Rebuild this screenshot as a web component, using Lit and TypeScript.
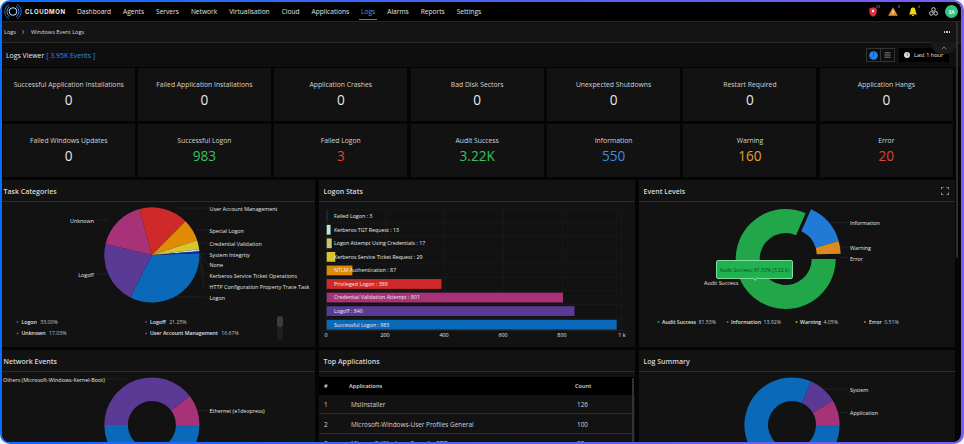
import { LitElement, html, css, svg } from "lit";
import { customElement } from "lit/decorators.js";

const C = { blue: "#0a69b8", purple: "#5b3a96", mag: "#a83277", red: "#cf2a2a", orange: "#e08a05", yellow: "#d8c52c", pale: "#bfe3da", navy: "#1a2a9c", olive: "#c6c86a", green: "#22a64a", info: "#1f7bd6", warn: "#db8a1e" };

function pt(cx: number, cy: number, r: number, a: number) {
  const t = (a * Math.PI) / 180;
  return `${(cx + r * Math.cos(t)).toFixed(2)} ${(cy + r * Math.sin(t)).toFixed(2)}`;
}
function arc(cx: number, cy: number, r0: number, r1: number, a: number, b: number) {
  const large = b - a > 180 ? 1 : 0;
  if (r0 === 0) return `M${cx} ${cy}L${pt(cx, cy, r1, a)}A${r1} ${r1} 0 ${large} 1 ${pt(cx, cy, r1, b)}Z`;
  return `M${pt(cx, cy, r1, a)}A${r1} ${r1} 0 ${large} 1 ${pt(cx, cy, r1, b)}L${pt(cx, cy, r0, b)}A${r0} ${r0} 0 ${large} 0 ${pt(cx, cy, r0, a)}Z`;
}
type Slice = [number, number, string];
const slices = (cx: number, cy: number, r0: number, r1: number, list: Slice[]) =>
  list.map(([a, b, c]) => svg`<path d=${arc(cx, cy, r0, r1, a, b)} fill=${c}></path>`);
type Label = [string, number, number, string, number, number, number, number];
const labels = (list: Label[]) =>
  list.map(([t, x, y, anchor, x1, y1, x2, y2]) => svg`
    <path class="lead" d="M${x1} ${y1}L${x2} ${y2}"></path>
    <text class="lbl" x=${x} y=${y + 0.7} text-anchor=${anchor}>${t}</text>`);

const NAV = ["Dashboard", "Agents", "Servers", "Network", "Virtualisation", "Cloud", "Applications", "Logs", "Alarms", "Reports", "Settings"];
const KPI: [string, string, string?][] = [
  ["Successful Application Installations", "0"],
  ["Failed Application Installations", "0"],
  ["Application Crashes", "0"],
  ["Bad Disk Sectors", "0"],
  ["Unexpected Shutdowns", "0"],
  ["Restart Required", "0"],
  ["Application Hangs", "0"],
  ["Failed Windows Updates", "0"],
  ["Successful Logon", "983", "g"],
  ["Failed Logon", "3", "r"],
  ["Audit Success", "3.22K", "g"],
  ["Information", "550", "b"],
  ["Warning", "160", "o"],
  ["Error", "20", "r"],
];
const BARS: [string, number, string][] = [
  ["Failed Logon : 3", 3, C.navy],
  ["Kerberos TGT Request : 13", 13, C.pale],
  ["Logon Attempt Using Credentials : 17", 17, C.olive],
  ["Kerberos Service Ticket Request : 29", 29, C.yellow],
  ["NTLM Authentication : 87", 87, C.orange],
  ["Privileged Logon : 389", 389, C.red],
  ["Credential Validation Attempt : 801", 801, C.mag],
  ["Logoff : 840", 840, C.purple],
  ["Successful Logon : 983", 983, C.blue],
];

@customElement("app-root")
export class AppRoot extends LitElement {
  static styles = css`
    :host { display: block; width: 964px; height: 444px; background: #f4f4f6; font-family: "Open Sans", "Noto Sans", sans-serif; color: #e4e4e4; }
    .frame { width: 964px; height: 444px; box-sizing: border-box; padding: 2px 3px 2px 2px; border-radius: 10px; background: linear-gradient(90deg, #0a6eff 0%, #4f63ee 55%, #7a5cf6 100%); }
    .inner { position: relative; height: 440px; border-radius: 8px; background: #050505; overflow: hidden; }
    .nav { height: 19px; background: #000; border-bottom: 1px solid #262626; display: flex; align-items: center; box-sizing: content-box; }
    .brand { display: flex; align-items: center; gap: 3px; width: 73px; margin-left: 2px; flex: none; }
    .brand span { font: 700 6px Inter, sans-serif; letter-spacing: 0.62px; color: #eee; }
    .menu { display: flex; gap: 12px; font-size: 6.6px; color: #e2e2e2; height: 100%; align-items: center; }
    .menu span { position: relative; line-height: 19px; }
    .menu .on { color: #4a9bf0; }
    .menu .on::after { content: ""; position: absolute; left: -2px; right: -2px; bottom: 1.5px; height: 1px; background: #3d8de8; }
    .tools { margin-left: auto; display: flex; align-items: center; margin-right: 3px; }
    .tool { position: relative; width: 20px; height: 14px; display: flex; align-items: center; justify-content: center; }
    .tool i { position: absolute; right: 3px; top: -1px; font: normal 3.6px "Open Sans", sans-serif; color: #aaa; }
    .avatar { width: 13px; height: 13px; border-radius: 50%; background: #35c486; color: #eafff4; font: 700 4.6px "Open Sans", sans-serif; display: flex; align-items: center; justify-content: center; margin-left: 2px; }
    .crumb { height: 20px; background: #141414; border-bottom: 1px solid #2a2a2a; display: flex; align-items: center; padding: 0 11px 0 2px; font-size: 5.6px; color: #ddd; gap: 4.5px; }
    .crumb .gap { margin-left: 2px; }
    .crumb .dots { margin-left: auto; display: flex; gap: 1px; }
    .crumb .dots b { width: 1.4px; height: 1.4px; border-radius: 50%; background: #eee; }
    .bump { position: absolute; right: 4px; top: 40px; width: 26px; height: 12px; border-radius: 0 0 11px 11px; background: #191919; display: flex; align-items: center; justify-content: center; }
    .viewer { height: 24px; background: #0e0e0e; display: flex; align-items: center; padding: 0 12px 0 4px; font-size: 6.9px; font-weight: 500; color: #e8e8e8; gap: 2px; }
    .viewer > span, .viewer em { padding-top: 1px; }
    .viewer em { font-style: normal; color: #2f8cf0; }
    .viewer .right { margin-left: auto; display: flex; align-items: center; gap: 4px; }
    .toggle { display: flex; height: 14px; border: 1px solid #333; box-sizing: border-box; }
    .toggle span { width: 13px; display: flex; align-items: center; justify-content: center; }
    .toggle span + span { border-left: 1px solid #333; }
    .time { height: 14px; width: 50px; background: #000; display: flex; align-items: center; gap: 4px; padding-left: 5px; box-sizing: border-box; font-size: 5.6px; color: #e6e6e6; }
    .kpis { display: grid; grid-template-columns: 131.5px repeat(6, 133px); grid-auto-rows: 53px; gap: 3px 3.4px; margin: 1px 0 0 1px; }
    .kpi { background: #121212; text-align: center; padding-top: 12px; box-sizing: border-box; }
    .kpi p { margin: 0; font-size: 6.8px; line-height: 10px; color: #d2d2d2; }
    .kpi b { display: block; font-weight: 400; font-size: 13.6px; line-height: 18px; margin-top: 1px; color: #e8e8e8; }
    .kpi b.g { color: #35c45a; } .kpi b.r { color: #e0403a; } .kpi b.b { color: #3b8ce8; } .kpi b.o { color: #e8a02e; }
    .panels { display: grid; grid-template-columns: repeat(3, 316px); grid-template-rows: 166.6px 100px; gap: 3.4px 4px; margin: 3px 0 0 -3px; }
    .panel { background: #121212; overflow: hidden; position: relative; }
    .head { height: 22px; border-bottom: 1px solid #2b2b2b; box-sizing: border-box; display: flex; align-items: center; justify-content: space-between; padding: 1.5px 6px 0 4.5px; font-size: 7px; font-weight: 600; color: #d8d8d8; }
    .panel svg.chart { display: block; }
    .lbl { font-size: 5.4px; fill: #e6e6e6; }
    .lead { stroke: #2e2e2e; stroke-width: 0.6; fill: none; }
    .leg { font-size: 5.2px; fill: #e0e0e0; font-weight: 600; }
    .legv { font-size: 5.2px; fill: #c4c4c4; font-weight: 400; }
    .grid { stroke: #1f1f1f; stroke-width: 0.6; }
    .barl { font-size: 5.3px; fill: #eee; }
    .tip { position: absolute; left: 77px; top: 80px; width: 77px; height: 19px; box-sizing: border-box; border: 0.7px solid #7fdc9c; border-radius: 2px; background: #20b24f; color: #0d4a22; font-size: 5px; display: flex; align-items: center; justify-content: center; white-space: nowrap; }
    .tip::after { content: ""; position: absolute; left: 36px; bottom: -2.4px; width: 3.4px; height: 3.4px; background: #20b24f; border-right: 0.7px solid #7fdc9c; border-bottom: 0.7px solid #7fdc9c; transform: rotate(45deg); }
    .thead, .row { display: grid; grid-template-columns: 25px 226px 60px; padding-left: 5px; align-items: center; }
    .thead { height: 18px; margin-top: 5px; padding-top: 1px; box-sizing: border-box; background: #000; font-size: 5.6px; font-weight: 600; color: #ddd; }
    .row { height: 19.5px; padding-top: 1px; border-bottom: 1px solid #2a2a2a; box-sizing: border-box; font-size: 6.4px; color: #d4d4d4; }
    .row span:nth-child(2), .row span:nth-child(3) { padding-left: 2px; }
    .tbar { position: absolute; right: 1px; top: 28px; bottom: 0; width: 2px; background: #333; }
    .scroll { position: absolute; right: 3px; top: 20px; width: 2.4px; height: 236px; background: #2e2e2e; border-radius: 2px; }
  `;

  private taskChart() {
    const cx = 151.9, cy = 256;
    return svg`<svg class="chart" width="316" height="143.6" viewBox="-1 203 316 143.6">
      ${slices(cx, cy, 0, 47.6, [
        [-2, 117, C.blue], [117, 193.5, C.purple], [193.5, 254.8, C.mag], [254.8, 314.8, C.red],
        [314.8, 342, C.orange], [342, 353, C.yellow], [353, 355.5, C.pale], [355.5, 358, C.navy],
      ])}
      ${labels([
        ["User Account Management", 209.5, 211, "start", 177, 209, 207, 209],
        ["Special Logon", 209.5, 233, "start", 196, 231, 207, 231],
        ["Credential Validation", 209.5, 246, "start", 199, 244, 207, 244],
        ["System Integrity", 209.5, 257, "start", 199, 254, 207, 255],
        ["None", 209.5, 267.5, "start", 200, 255, 207, 265],
        ["Kerberos Service Ticket Operations", 209.5, 278, "start", 200, 256, 204, 276],
        ["HTTP Configuration Property Trace Task", 209.5, 289, "start", 199, 258, 204, 287],
        ["Logon", 209.5, 300, "start", 176, 298, 207, 298],
        ["Unknown", 94, 223, "end", 108, 221, 97, 221],
        ["Logoff", 94, 277, "end", 106, 275, 97, 275],
      ])}
      <circle cx="17.5" cy="323" r="1" fill=${C.blue}></circle>
      <text x="21.5" y="325" class="leg">Logon <tspan class="legv" dx="2">33.00%</tspan></text>
      <circle cx="146" cy="323" r="1" fill=${C.purple}></circle>
      <text x="150" y="325" class="leg">Logoff <tspan class="legv" dx="2">21.25%</tspan></text>
      <circle cx="17.5" cy="334.5" r="1" fill=${C.mag}></circle>
      <text x="21.5" y="336.5" class="leg">Unknown <tspan class="legv" dx="2">17.03%</tspan></text>
      <circle cx="146" cy="334.5" r="1" fill=${C.mag}></circle>
      <text x="150" y="336.5" class="leg">User Account Management <tspan class="legv" dx="2">16.67%</tspan></text>
      <rect x="277" y="317" width="6" height="25" rx="3" fill="#1e1e1e"></rect>
      <rect x="277" y="317" width="6" height="11" rx="3" fill="#3c3c3c"></rect>
    </svg>`;
  }

  private logonChart() {
    const x0 = 326.7, k = 0.295;
    const top = 210.5, pitch = 13.56;
    return svg`<svg class="chart" width="316" height="143.6" viewBox="319 203 316 143.6">
      ${[1, 2, 3, 4, 5].map((i) => svg`<path class="grid" d="M${x0 + i * 59} 210V331"></path>`)}
      ${BARS.map((_, i) => svg`<path class="grid" d="M${x0} ${top + i * pitch}H622"></path>`)}
      <path d="M${x0} 210V331.5H622" stroke="#2b2b2b" stroke-width="0.6" fill="none"></path>
      ${BARS.map(([t, v, c], i) => svg`
        <rect x=${x0} y=${top + i * pitch + 1.8} width=${Math.max(v * k, 0.9)} height="9.8" fill=${c}></rect>
        <text class="barl" x="334" y=${top + i * pitch + 8.6}>${t}</text>`)}
      ${[["0", 326], ["200", 385], ["400", 444], ["600", 503], ["800", 562], ["1 k", 622]].map(
        ([t, x]) => svg`<text class="lbl" x=${x} y="338.5" text-anchor="middle">${t}</text>`
      )}
    </svg>`;
  }

  private levelChart() {
    const cx = 785.7, cy = 260;
    return svg`<svg class="chart" width="316" height="143.6" viewBox="639 203 316 143.6">
      ${slices(cx, cy, 26, 50, [[0, 293.5, C.green]])}
      ${slices(cx + 5, cy - 4, 26, 50, [[294, 343.6, C.info], [343.6, 358.6, C.warn]])}
      ${labels([
        ["Information", 850, 225.5, "start", 829, 223.5, 848, 223.5],
        ["Warning", 850, 250.2, "start", 840, 248, 848, 248],
        ["Error", 850, 261.3, "start", 840, 258, 848, 259],
        ["Audit Success", 704, 285.3, "start", 735, 283, 737, 283],
      ])}
      <circle cx="658.5" cy="323" r="1" fill=${C.green}></circle>
      <text x="662" y="325" class="leg">Audit Success <tspan class="legv" dx="1">81.53%</tspan></text>
      <circle cx="727.5" cy="323" r="1" fill=${C.info}></circle>
      <text x="731" y="325" class="leg">Information <tspan class="legv" dx="1">13.92%</tspan></text>
      <circle cx="796.5" cy="323" r="1" fill=${C.warn}></circle>
      <text x="800" y="325" class="leg">Warning <tspan class="legv" dx="1">4.05%</tspan></text>
      <circle cx="865" cy="323" r="1" fill="#c85a8a"></circle>
      <text x="869" y="325" class="leg">Error <tspan class="legv" dx="1">0.51%</tspan></text>
    </svg>`;
  }

  private netChart() {
    const cx = 151.9, cy = 426;
    return svg`<svg class="chart" width="316" height="77" viewBox="-1 373 316 77">
      ${slices(cx, cy, 24, 47.6, [[0, 180, C.blue], [180, 323, C.purple], [323, 360, C.mag]])}
      ${labels([
        ["Others (Microsoft-Windows-Kernel-Boot)", 3, 382, "start", 96, 380, 126, 380],
        ["Ethernet (e1dexpress)", 209.5, 413.5, "start", 198, 411.5, 207, 411.5],
      ])}
    </svg>`;
  }

  private sumChart() {
    const cx = 792, cy = 426;
    return svg`<svg class="chart" width="316" height="77" viewBox="639 373 316 77">
      ${slices(cx, cy, 24, 47.6, [[0, 294, C.blue], [294, 329.5, C.purple], [329.5, 360, C.mag]])}
      ${labels([
        ["System", 850, 392, "start", 822, 390, 848, 390],
        ["Application", 850, 415.5, "start", 838, 413.5, 848, 413.5],
      ])}
    </svg>`;
  }

  render() {
    return html`<div class="frame"><div class="inner">
      <div class="nav">
        <div class="brand">
          <svg width="18" height="17" viewBox="0 0 18 17" fill="none">
            <path d="M5 1.5A8 8 0 0 0 5 15.5M13 1.5A8 8 0 0 1 13 15.5" stroke="#1e6fe0" stroke-width="1"></path>
            <path d="M6 3.3A6 6 0 0 0 6 13.7M12 3.3A6 6 0 0 1 12 13.7" stroke="#3f8df0" stroke-width="1"></path>
            <circle cx="9" cy="8.5" r="3.8" stroke="#cfe2ff" stroke-width="1"></circle>
          </svg>
          <span>CLOUDMON</span>
        </div>
        <div class="menu">${NAV.map((n) => html`<span class=${n === "Logs" ? "on" : ""}>${n}</span>`)}</div>
        <div class="tools">
          <div class="tool"><svg width="8" height="10" viewBox="0 0 8 10"><path d="M4 0.3L7.7 1.6V5C7.7 7.4 5.8 9 4 9.8 2.2 9 .3 7.4 .3 5V1.6Z" fill="#e0303c"></path><circle cx="4" cy="4" r="1.2" fill="#fff"></circle></svg><i>23</i></div>
          <div class="tool"><svg width="10" height="9" viewBox="0 0 10 9"><path d="M5 0.2L9.8 8.8H.2Z" fill="#e8912a"></path><path d="M5 3V6M5 6.8V7.6" stroke="#fff" stroke-width="0.8"></path></svg><i>8</i></div>
          <div class="tool"><svg width="8" height="10" viewBox="0 0 8 10"><path d="M4 0.4C5.9 0.4 6.5 2 6.5 3.6 6.5 5.6 7.8 6.6 7.8 7.4H.2C.2 6.6 1.5 5.6 1.5 3.6 1.5 2 2.1 0.4 4 0.4Z" fill="#f4d80e"></path><path d="M2.9 8.1H5.1A1.1 1.1 0 0 1 2.9 8.1Z" fill="#f4d80e"></path></svg><i>4</i></div>
          <div class="tool"><svg width="9" height="9" viewBox="0 0 9 9" fill="none" stroke="#e6e6e6" stroke-width="0.9"><circle cx="4.5" cy="2.4" r="1.8"></circle><circle cx="2.3" cy="6.4" r="1.8"></circle><circle cx="6.7" cy="6.4" r="1.8"></circle></svg></div>
          <div class="avatar">SA</div>
        </div>
      </div>
      <div class="crumb">
        <span>Logs</span>
        <svg width="4" height="6" viewBox="0 0 4 6" fill="none" stroke="#bbb" stroke-width="0.6"><path d="M1 .8L3 3 1 5.2"></path></svg>
        <span class="gap">Windows Event Logs</span>
        <span class="dots"><b></b><b></b><b></b></span>
      </div>
      <div class="bump"><svg width="6" height="4" viewBox="0 0 6 4" fill="none" stroke="#bbb" stroke-width="0.6"><path d="M.8 3.2L3 1 5.2 3.2"></path></svg></div>
      <div class="viewer">
        <span>Logs Viewer</span><em>[ 3.95K Events ]</em>
        <div class="right">
          <div class="toggle">
            <span><svg width="9" height="9" viewBox="0 0 9 9"><circle cx="4.5" cy="4.5" r="4.3" fill="#2287ee"></circle><path d="M4.5 4.5V.6M4.5 4.5L1.5 7" stroke="#0b1a2c" stroke-width="0.4"></path></svg></span>
            <span><svg width="7" height="6" viewBox="0 0 7 6" stroke="#8a8a8a" stroke-width="0.9"><path d="M.5 .8H6.5M.5 3H6.5M.5 5.2H6.5"></path></svg></span>
          </div>
          <div class="time">
            <svg width="6" height="6" viewBox="0 0 6 6"><circle cx="3" cy="3" r="3" fill="#dcdcdc"></circle><path d="M3 1.2V3.2H4.3" stroke="#222" stroke-width="0.5" fill="none"></path></svg>
            <span>Last 1 hour</span>
          </div>
        </div>
      </div>
      <div class="kpis">
        ${KPI.map(([t, v, c]) => html`<div class="kpi"><p>${t}</p><b class=${c ?? ""}>${v}</b></div>`)}
      </div>
      <div class="panels">
        <div class="panel"><div class="head"><span>Task Categories</span></div>${this.taskChart()}</div>
        <div class="panel"><div class="head"><span>Logon Stats</span></div>${this.logonChart()}</div>
        <div class="panel">
          <div class="head"><span>Event Levels</span>
            <svg width="8" height="8" viewBox="0 0 8 8" fill="none" stroke="#cfcfcf" stroke-width="0.7"><path d="M.4 2.4V.4H2.4M5.6 .4H7.6V2.4M7.6 5.6V7.6H5.6M2.4 7.6H.4V5.6"></path></svg>
          </div>
          ${this.levelChart()}
          <div class="tip">Audit Success: 81.53% (3.22 k)</div>
        </div>
        <div class="panel"><div class="head"><span>Network Events</span></div>${this.netChart()}</div>
        <div class="panel">
          <div class="head"><span>Top Applications</span></div>
          <div class="thead"><span>#</span><span>Applications</span><span>Count</span></div>
          <div class="row"><span>1</span><span>MsiInstaller</span><span>126</span></div>
          <div class="row"><span>2</span><span>Microsoft-Windows-User Profiles General</span><span>100</span></div>
          <div class="row"><span>3</span><span>Microsoft-Windows-Security-SPP</span><span>85</span></div>
          <div class="tbar"></div>
        </div>
        <div class="panel"><div class="head"><span>Log Summary</span></div>${this.sumChart()}</div>
      </div>
      <div class="scroll"></div>
    </div></div>`;
  }
}
